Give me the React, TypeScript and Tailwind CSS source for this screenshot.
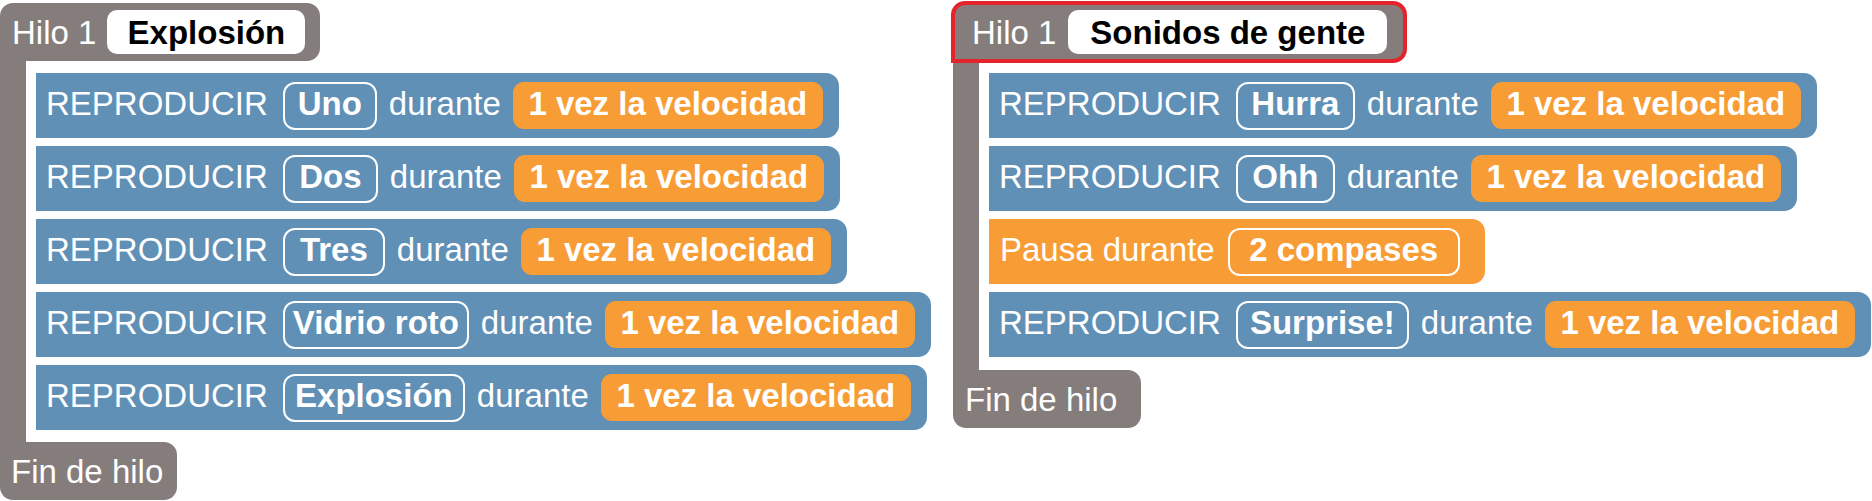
import React from "react";

const FONT = "font-['Liberation_Sans',Arial,Helvetica,sans-serif]";

function SoundPill({ label, w }: { label: string; w: string }) {
  return (
    <div
      className={`${w} h-[48px] shrink-0 rounded-[12px] border-2 border-white flex items-center justify-center pb-[4px] font-bold whitespace-nowrap`}
    >
      {label}
    </div>
  );
}

function SpeedPill() {
  return (
    <div className="w-[310px] h-[47px] shrink-0 rounded-[11px] bg-[#f89c35] flex items-center justify-center pb-[4px] font-bold whitespace-nowrap">
      1 vez la velocidad
    </div>
  );
}

function PlayBlock({ sound, w }: { sound: string; w: string }) {
  return (
    <div className="flex h-[65px] w-fit items-center gap-[12px] rounded-r-[13px] bg-[#6090b6] pl-[10px] pr-[16px] text-white">
      <span className="mb-[4px] mr-[3px] whitespace-nowrap">REPRODUCIR</span>
      <SoundPill label={sound} w={w} />
      <span className="mb-[4px] whitespace-nowrap">durante</span>
      <SpeedPill />
    </div>
  );
}

function PauseBlock() {
  return (
    <div className="flex h-[65px] w-fit items-center gap-[12px] rounded-r-[13px] bg-[#f89c35] pl-[11px] pr-[25px] text-white">
      <span className="mb-[4px] mr-[1px] whitespace-nowrap">Pausa durante</span>
      <SoundPill label="2 compases" w="w-[232px]" />
    </div>
  );
}

function HeaderPill({ label, w }: { label: string; w: string }) {
  return (
    <div
      className={`${w} h-[44px] shrink-0 rounded-[10px] bg-white text-black font-bold flex items-center justify-center whitespace-nowrap`}
    >
      {label}
    </div>
  );
}

export default function App() {
  return (
    <div
      className={`${FONT} text-[33px] leading-none bg-white w-[1872px] h-[501px] overflow-hidden grid grid-cols-[951px_921px] items-start`}
    >
      {/* Left thread */}
      <div className="flex flex-col pt-[3px]">
        <div className="flex h-[58px] w-fit items-center gap-[11px] rounded-t-[13px] rounded-br-[13px] bg-[#857d7c] pl-[12px] pr-[15px] text-white">
          <span className="whitespace-nowrap">Hilo 1</span>
          <HeaderPill label="Explosión" w="w-[198px]" />
        </div>
        <div className="flex">
          <div className="w-[26px] shrink-0 bg-[#857d7c]" />
          <div className="flex flex-col gap-[8px] pl-[10px] py-[12px]">
            <PlayBlock sound="Uno" w="w-[94px]" />
            <PlayBlock sound="Dos" w="w-[95px]" />
            <PlayBlock sound="Tres" w="w-[102px]" />
            <PlayBlock sound="Vidrio roto" w="w-[186px]" />
            <PlayBlock sound="Explosión" w="w-[182px]" />
          </div>
        </div>
        <div className="flex h-[58px] w-[177px] items-center rounded-b-[13px] rounded-tr-[13px] bg-[#857d7c] pl-[11px] text-white whitespace-nowrap">
          Fin de hilo
        </div>
      </div>

      {/* Right thread */}
      <div className="flex flex-col pt-[1px]">
        <div className="flex h-[62px] w-fit items-center gap-[12px] rounded-t-[14px] rounded-br-[14px] border-4 border-[#e4232b] bg-[#857d7c] pl-[17px] pr-[16px] text-white">
          <span className="whitespace-nowrap">Hilo 1</span>
          <HeaderPill label="Sonidos de gente" w="w-[319px]" />
        </div>
        <div className="flex ml-[2px]">
          <div className="w-[26px] shrink-0 bg-[#857d7c]" />
          <div className="flex flex-col gap-[8px] pl-[10px] pt-[10px] pb-[13px]">
            <PlayBlock sound="Hurra" w="w-[119px]" />
            <PlayBlock sound="Ohh" w="w-[99px]" />
            <PauseBlock />
            <PlayBlock sound="Surprise!" w="w-[173px]" />
          </div>
        </div>
        <div className="ml-[2px] flex h-[58px] w-[188px] items-center rounded-b-[13px] rounded-tr-[13px] bg-[#857d7c] pl-[12px] text-white whitespace-nowrap">
          Fin de hilo
        </div>
      </div>
    </div>
  );
}
